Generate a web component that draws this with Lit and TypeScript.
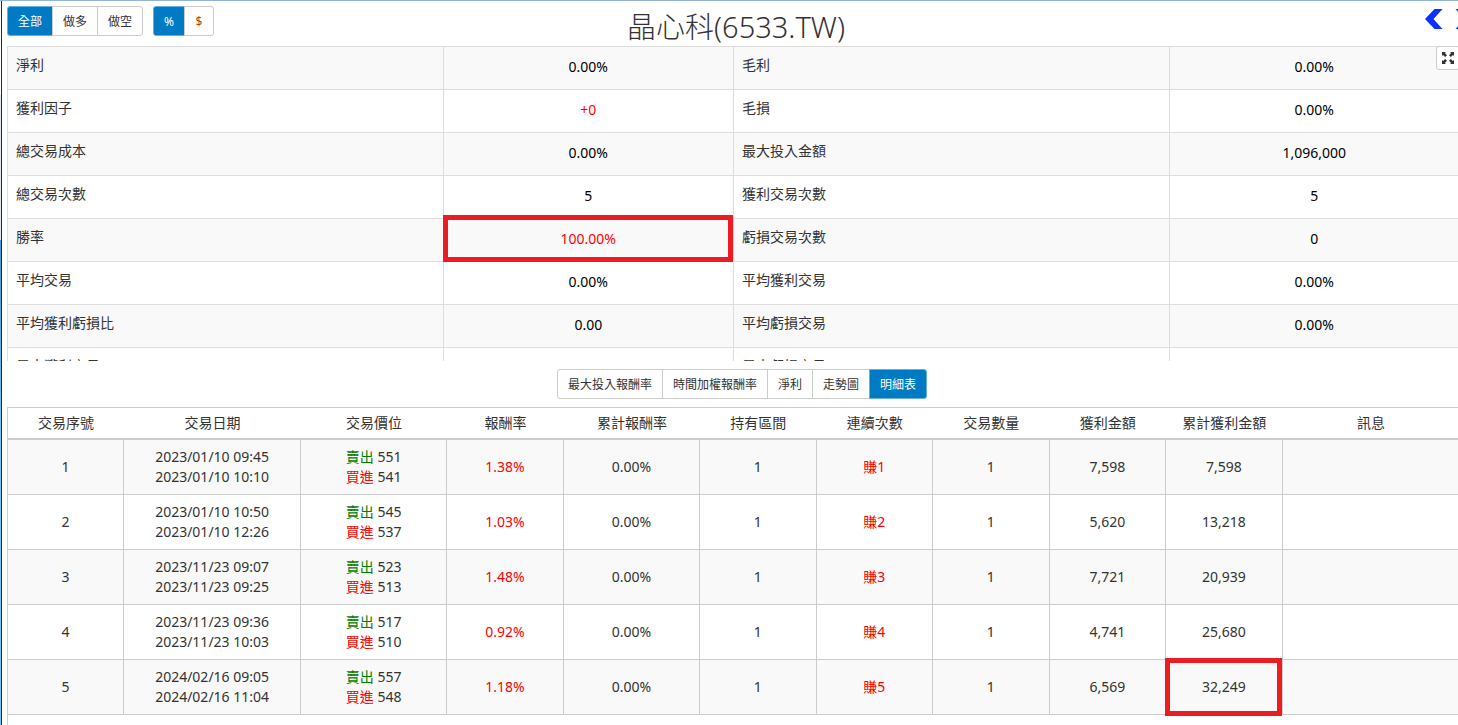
import { LitElement, html, css } from "lit";
import { customElement, state } from "lit/decorators.js";

type Stat = [string, string, string?];

const stats: [Stat, Stat][] = [
  [["淨利", "0.00%"], ["毛利", "0.00%"]],
  [["獲利因子", "+0", "up"], ["毛損", "0.00%"]],
  [["總交易成本", "0.00%"], ["最大投入金額", "1,096,000"]],
  [["總交易次數", "5"], ["獲利交易次數", "5"]],
  [["勝率", "100.00%", "up marked"], ["虧損交易次數", "0"]],
  [["平均交易", "0.00%"], ["平均獲利交易", "0.00%"]],
  [["平均獲利虧損比", "0.00"], ["平均虧損交易", "0.00%"]],
  [["最大獲利交易", "0.00%"], ["最大虧損交易", "0.00%"]],
];

const heads = ["交易序號", "交易日期", "交易價位", "報酬率", "累計報酬率", "持有區間", "連續次數", "交易數量", "獲利金額", "累計獲利金額", "訊息"];
const columns = ["narrow", "date", "price", "mid", "rate", "mid", "narrow", "mid", "narrow", "mid", "note"];

const trades = [
  { open: "2023/01/10 09:45", close: "2023/01/10 10:10", sell: 551, buy: 541, rate: "1.38%", gain: "7,598", total: "7,598" },
  { open: "2023/01/10 10:50", close: "2023/01/10 12:26", sell: 545, buy: 537, rate: "1.03%", gain: "5,620", total: "13,218" },
  { open: "2023/11/23 09:07", close: "2023/11/23 09:25", sell: 523, buy: 513, rate: "1.48%", gain: "7,721", total: "20,939" },
  { open: "2023/11/23 09:36", close: "2023/11/23 10:03", sell: 517, buy: 510, rate: "0.92%", gain: "4,741", total: "25,680" },
  { open: "2024/02/16 09:05", close: "2024/02/16 11:04", sell: 557, buy: 548, rate: "1.18%", gain: "6,569", total: "32,249" },
];

@customElement("app-root")
export class AppRoot extends LitElement {
  @state() private side = "全部";
  @state() private unit = "%";
  @state() private view = "明細表";

  static styles = css`
    :host {
      display: block;
      min-height: 100vh;
      box-sizing: border-box;
      overflow: hidden;
      padding-left: 1px;
      background: linear-gradient(#fff 0 13%, #dfe5ec 13% 33%, #4f94d4 33%, #85c0f2 60%) 0 0 / 1px 100% no-repeat #fff;
      border-top: 1px solid #95b3d7;
      color: #333;
      font: 14px/20px "Noto Sans", "Noto Sans CJK TC", sans-serif;
    }
    .page {
      display: flex;
      flex-direction: column;
      box-sizing: border-box;
      min-height: calc(100vh - 1px);
      margin-right: -1px;
      padding-left: 5px;
      border-left: 1px solid #222a33;
    }
    .top {
      display: grid;
      grid-template-columns: 1fr auto 1fr;
      align-items: start;
      height: 45px;
    }
    .tools { display: flex; gap: 10px; padding-top: 5px; }
    .group { display: inline-flex; }
    .group button {
      margin: 0 0 0 -1px;
      padding: 6px 10px 4px;
      border: 1px solid #ccc;
      background: #fff;
      color: #333;
      font: 12px/18px "Noto Sans", "Noto Sans CJK TC", sans-serif;
      min-width: 30px;
    }
    .group button:first-child { margin-left: 0; border-radius: 3px 0 0 3px; }
    .group button:last-child { border-radius: 0 3px 3px 0; }
    .group button.on { background: #007ac3; border-color: #66afe0; color: #fff; }
    .group button.money { color: #a64b00; }
    h1 {
      margin: 0;
      padding: 6px 0 0 6px;
      font-size: 29px;
      line-height: 40px;
      font-weight: 300;
    }
    .arrows {
      display: flex;
      justify-content: flex-end;
      gap: 12px;
      margin-right: -14px;
      padding-top: 8px;
    }
    .arrows button, .expand {
      padding: 0;
      border: 0;
      background: none;
      line-height: 0;
    }
    .panel { position: relative; }
    .scroll { height: 315px; overflow: hidden; }
    .expand {
      position: absolute;
      top: 0;
      right: -1px;
      padding: 5px;
      border: 1px solid #ccc;
      border-radius: 3px;
      background: #fff;
    }
    table {
      width: 100%;
      table-layout: fixed;
      border-collapse: separate;
      border-spacing: 0;
    }
    td { position: relative; }
    tbody tr:nth-child(odd) { background: #f9f9f9; }
    .stats th, .stats td {
      box-sizing: border-box;
      height: 43px;
      border-top: 1px solid #ddd;
      border-left: 1px solid #ddd;
    }
    .stats th {
      width: 30%;
      padding: 8px 8px 0;
      vertical-align: top;
      text-align: left;
      font-weight: 400;
    }
    .stats td {
      width: 20%;
      padding: 0 8px 2px;
      text-align: center;
      color: #000;
    }
    .tabs { display: flex; justify-content: center; padding: 8px 0 8px 18px; }
    .list { flex: 1; border-left: 1px solid #ccc; border-top: 1px solid #ccc; }
    .trades th {
      box-sizing: border-box;
      height: 32px;
      padding: 0;
      border-bottom: 2px solid #ccc;
      font-weight: 400;
    }
    .trades td {
      box-sizing: border-box;
      height: 55px;
      padding: 0;
      border-bottom: 1px solid #ccc;
      border-right: 1px solid #ccc;
      text-align: center;
    }
    .narrow { width: 8%; }
    .mid { width: 8.06%; }
    .rate { width: 9.36%; }
    .price { width: 10.06%; }
    .date { width: 12.2%; }
    .stats .up, .trades .up { color: #f00; }
    .down { color: #008000; }
    .marked::after {
      content: "";
      position: absolute;
      inset: -4px 0 -1px -1px;
      border: 5px solid #ed1c24;
      z-index: 1;
    }
    .trades .marked::after { inset: -2px 0 -2px -1px; }
  `;

  private group(label: string, items: string[], current: string, pick: (v: string) => void) {
    return html`<div class="group" role="group" aria-label=${label}>
      ${items.map(
        (i) => html`<button type="button" class="${i === current ? "on" : i === "$" ? "money" : ""}" @click=${() => pick(i)}>${i}</button>`
      )}
    </div>`;
  }

  render() {
    return html`<div class="page">
      <header class="top">
        <div class="tools">
          ${this.group("方向", ["全部", "做多", "做空"], this.side, (v) => (this.side = v))}
          ${this.group("單位", ["%", "$"], this.unit, (v) => (this.unit = v))}
        </div>
        <h1>晶心科(6533.TW)</h1>
        <div class="arrows">
          <button type="button" aria-label="上一個">
            <svg width="18" height="20" viewBox="0 0 18 20"><path d="M9.500 0H17.500L8.500 10L17.500 20H9.500L0 10z" fill="#0a32ff" /></svg>
          </button>
          <button type="button" aria-label="下一個">
            <svg width="18" height="20" viewBox="0 0 18 20"><path d="M8.500 0H0.500L9.500 10L0.500 20H8.500L18 10z" fill="#0a32ff" /></svg>
          </button>
        </div>
      </header>
      <section class="panel">
        <div class="scroll">
          <table class="stats">
            <tbody>
              ${stats.map(
                (row) => html`<tr>
                  ${row.map(([k, v, c]) => html`<th scope="row">${k}</th><td class=${c ?? ""}>${v}</td>`)}
                </tr>`
              )}
            </tbody>
          </table>
        </div>
        <button type="button" class="expand" aria-label="放大">
          <svg width="12" height="12" viewBox="0 0 12 12" fill="#333">
            <path d="M0 0h4L2.900 1.100 5 3.200 3.200 5 1.100 2.900 0 4z" />
            <path d="M12 0H8l1.100 1.100L7 3.200 8.800 5l2.100-2.100L12 4z" />
            <path d="M0 12h4l-1.100-1.100L5 8.800 3.200 7 1.100 9.100 0 8z" />
            <path d="M12 12H8l1.100-1.100L7 8.800 8.800 7l2.100 2.100L12 8z" />
          </svg>
        </button>
      </section>
      <nav class="tabs">
        ${this.group("檢視", ["最大投入報酬率", "時間加權報酬率", "淨利", "走勢圖", "明細表"], this.view, (v) => (this.view = v))}
      </nav>
      <section class="list">
        <table class="trades">
          <colgroup>${columns.map((c) => html`<col class=${c} />`)}</colgroup>
          <thead>
            <tr>${heads.map((h) => html`<th scope="col">${h}</th>`)}</tr>
          </thead>
          <tbody>
            ${trades.map(
              (t, i) => html`<tr>
                <td>${i + 1}</td>
                <td>${t.open}<br />${t.close}</td>
                <td><span class="down">賣出</span> ${t.sell}<br /><span class="up">買進</span> ${t.buy}</td>
                <td class="up">${t.rate}</td>
                <td>0.00%</td>
                <td>1</td>
                <td class="up">賺${i + 1}</td>
                <td>1</td>
                <td>${t.gain}</td>
                <td class=${i === trades.length - 1 ? "marked" : ""}>${t.total}</td>
                <td></td>
              </tr>`
            )}
          </tbody>
        </table>
      </section>
    </div>`;
  }
}
